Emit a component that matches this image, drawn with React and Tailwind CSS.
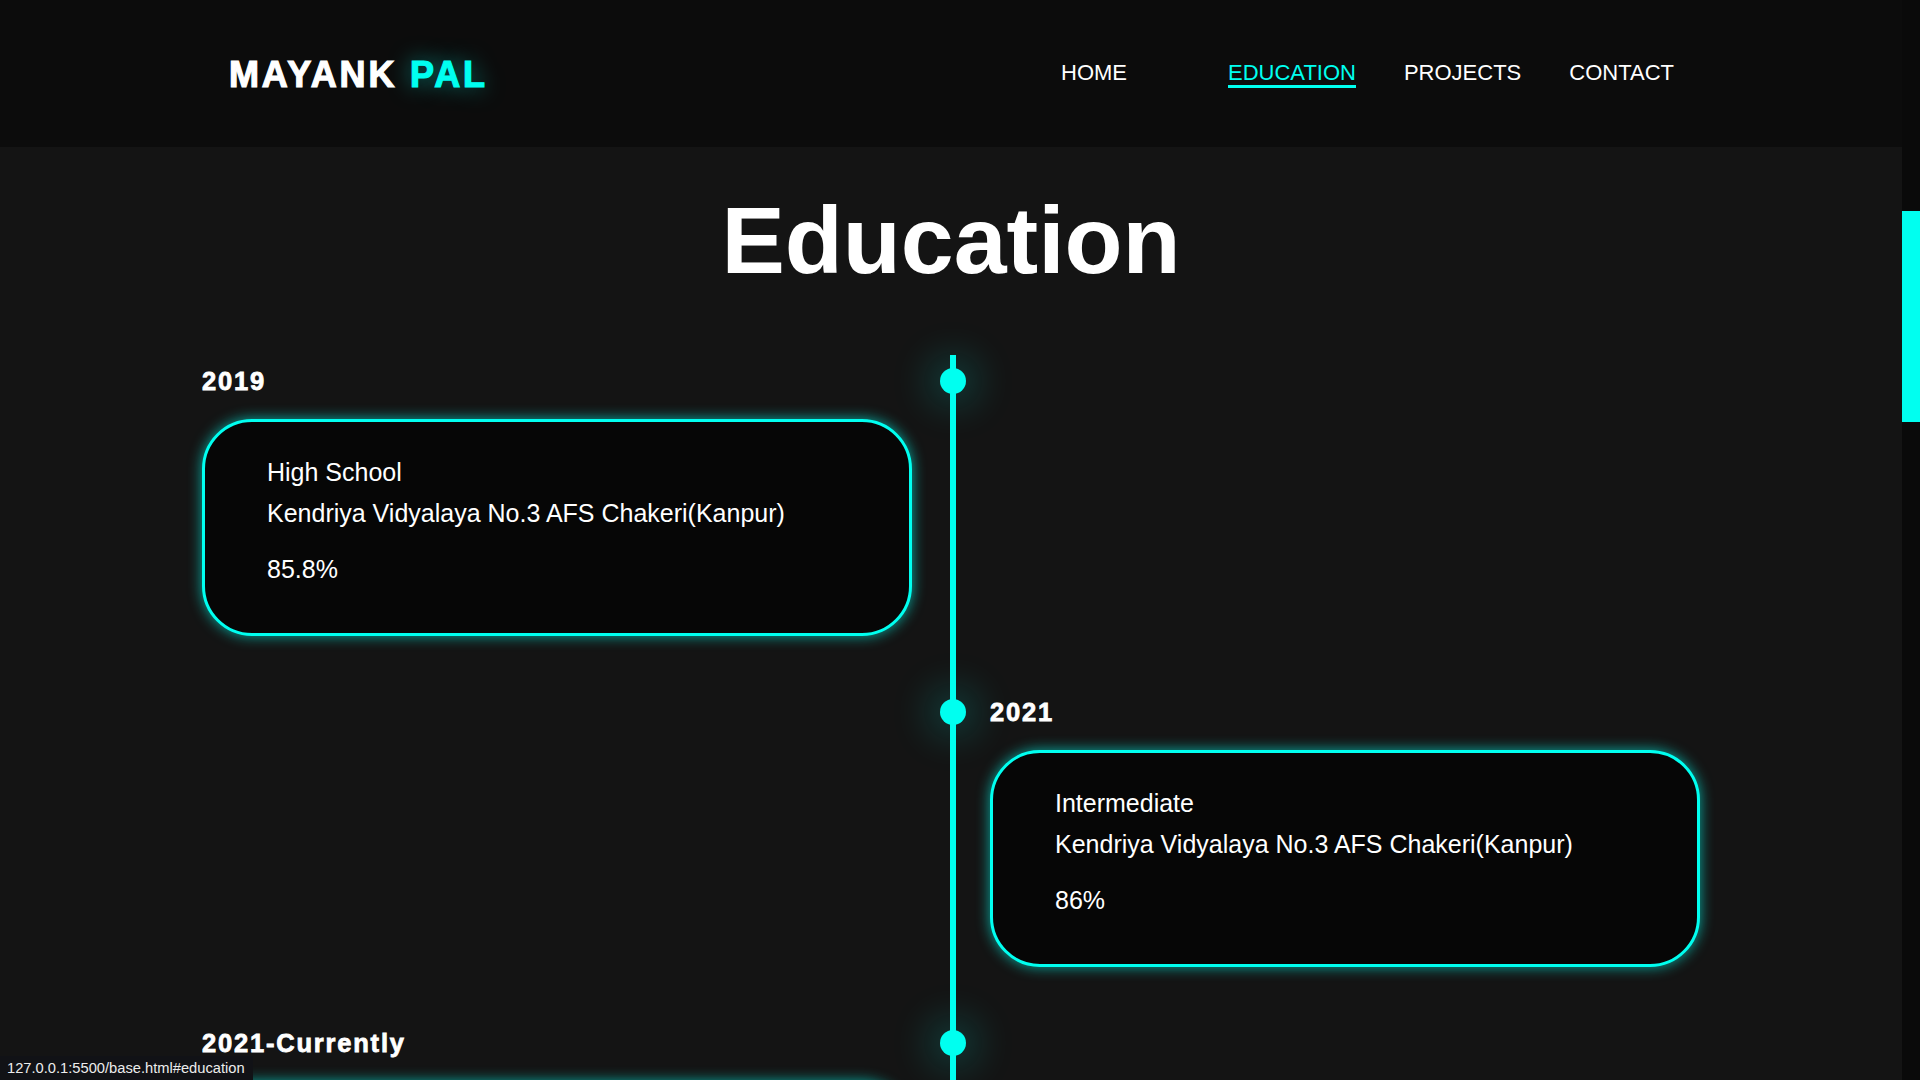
const links = [
  { label: "HOME", active: false },
  { label: "EDUCATION", active: true },
  { label: "PROJECTS", active: false },
  { label: "CONTACT", active: false },
];

const items = [
  {
    year: "2019",
    side: "left",
    level: "High School",
    school: "Kendriya Vidyalaya No.3 AFS Chakeri(Kanpur)",
    score: "85.8%",
  },
  {
    year: "2021",
    side: "right",
    level: "Intermediate",
    school: "Kendriya Vidyalaya No.3 AFS Chakeri(Kanpur)",
    score: "86%",
  },
  {
    year: "2021-Currently",
    side: "left",
    level: "B.Tech",
    school: "Pranveer Singh Institute of Technology(Kanpur)",
    score: "8.2 CGPA",
  },
];

function Entry({ item }) {
  return (
    <div>
      <div className="mt-[10px] h-[32px] text-[25.5px] font-bold leading-[32px] tracking-[1.8px] text-white [-webkit-text-stroke:0.8px_white]">
        {item.year}
      </div>
      <div className="mt-[22px] h-[217px] rounded-[50px] border-[3px] border-[#00fff0] bg-[#060606] pl-[62px] pt-[35px] shadow-[0_0_14px_rgba(0,255,240,0.65)]">
        <h3 className="text-[25px] font-normal leading-[30px] text-white">{item.level}</h3>
        <p className="mt-[11px] text-[25px] leading-[30px] text-white">{item.school}</p>
        <p className="mt-[26px] text-[25px] leading-[30px] text-white">{item.score}</p>
      </div>
    </div>
  );
}

function Timeline() {
  return (
    <div className="ml-[202px] mt-[67px]">
      {items.map((item) => (
        <div key={item.year} className="grid h-[331px] grid-cols-[710px_80px_708px]">
          <div>{item.side === "left" && <Entry item={item} />}</div>
          <div className="flex justify-center bg-[linear-gradient(#00fff0,#00fff0)] bg-[length:6px_100%] bg-[position:calc(50%+1px)_0] bg-no-repeat">
            <div className="ml-[2px] mt-[13px] h-[26px] w-[26px] rounded-full bg-[#00fff0] shadow-[0_0_40px_10px_rgba(0,255,240,0.22)]" />
          </div>
          <div className="-ml-[2px]">{item.side === "right" && <Entry item={item} />}</div>
        </div>
      ))}
    </div>
  );
}

export default function App() {
  return (
    <div
      className="relative flex h-[1080px] w-full overflow-hidden bg-[#141414]"
      style={{ fontFamily: '"Liberation Sans", Arial, sans-serif' }}
    >
      <main className="flex-1 overflow-hidden">
        <header className="flex h-[147px] items-center justify-between bg-[#0c0c0c] pl-[229px] pr-[228px]">
          <div className="mt-[2px] text-[36px] font-bold leading-none tracking-[2.8px] text-white [-webkit-text-stroke:1.2px_white]">
            MAYANK{" "}
            <span className="text-[#00fff0] [-webkit-text-stroke:1.2px_#00fff0] [text-shadow:0_0_22px_rgba(0,255,240,0.55)]">
              PAL
            </span>
          </div>
          <nav className="mt-[2px] flex items-center gap-[48px]">
            {links.map((l, i) => (
              <a
                key={l.label}
                href="#"
                className={[
                  "border-b-[3px] text-[22px] leading-[24px]",
                  i === 0 ? "mr-[53px]" : "",
                  l.active
                    ? "border-[#00fff0] text-[#00fff0]"
                    : "border-transparent text-white",
                ].join(" ")}
              >
                {l.label}
              </a>
            ))}
          </nav>
        </header>

        <h1 className="mt-[46px] text-center text-[95px] font-bold leading-[95px] text-white">
          Education
        </h1>

        <Timeline />
      </main>

      {/* fake scrollbar */}
      <aside className="w-[18px] shrink-0 bg-[#0a0a0a]">
        <div className="mt-[211px] h-[211px] w-full bg-[#00fff0]" />
      </aside>

      <div className="absolute bottom-0 left-0 flex h-[24px] w-[253px] items-center bg-[#111216] pl-[7px] text-[14.7px] text-[#ececec]">
        127.0.0.1:5500/base.html#education
      </div>
    </div>
  );
}
